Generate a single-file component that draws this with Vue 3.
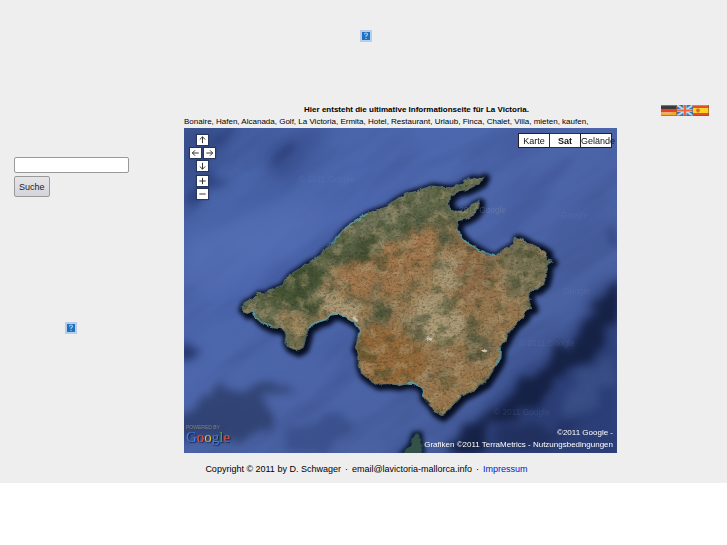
<script setup>
import { ref } from 'vue'

const query = ref('')
const mapTypes = ['Karte', 'Sat', 'Gelände']
const active = ref('Sat')

const controls = [
  { name: 'up', label: 'Nach oben', d: 'M5.500 9V2M2.500 5L5.500 2L8.500 5' },
  { name: 'left', label: 'Nach links', d: 'M9 5.500H2M5 2.500L2 5.500L5 8.500' },
  { name: 'right', label: 'Nach rechts', d: 'M2 5.500H9M6 2.500L9 5.500L6 8.500' },
  { name: 'down', label: 'Nach unten', d: 'M5.500 2V9M2.500 6L5.500 9L8.500 6' },
  { name: 'plus', label: 'Vergrößern', d: 'M5.500 2V9M2 5.500H9' },
  { name: 'minus', label: 'Verkleinern', d: 'M2 5.500H9' }
]

const island = 'M172 540L180 524L200 514L222 496L238 498L262 484L290 474L318 440L344 424L372 404L398 392L420 368L446 350L468 318L490 296L520 276L550 256L604 238L630 218L664 198L700 188L742 174L776 178L800 180L826 172L840 160L862 150L880 154L898 146L890 162L868 174L846 184L820 188L800 204L792 220L796 240L816 250L838 248L856 240L866 228L884 220L882 240L868 258L844 272L822 278L818 304L832 328L854 348L884 366L910 380L932 384L956 366L990 348L994 328L1010 332L1036 348L1068 360L1088 374L1086 394L1102 400L1088 410L1086 440L1080 464L1060 482L1040 486L1030 508L1044 540L1024 548L1018 566L990 590L972 616L960 640L948 658L946 690L936 712L920 736L904 762L886 774L862 788L832 804L810 826L790 848L772 862L752 850L736 826L716 806L714 782L694 766L668 764L640 770L610 766L580 768L556 754L534 736L524 710L524 682L512 660L522 630L528 604L512 584L488 570L462 558L440 560L426 574L400 582L370 602L364 630L356 658L340 668L314 656L304 638L306 618L292 602L262 598L236 586L216 568L206 548L188 556Z'
</script>

<template>
  <div class="page">
    <header class="banner">
      <svg class="missing" viewBox="0 0 12 12" role="img" aria-label="Logo">
        <rect width="12" height="12" fill="#b9cbe9" />
        <rect x="1" y="1" width="10" height="10" fill="#b5d0f0" />
        <rect x="2" y="2" width="8" height="8" fill="#1f70c0" />
        <path d="M4.500 4.500Q4.500 3 6 3T7.500 4.500Q7.500 5.300 6 6V7M6 8V9" fill="none" stroke="#a5cdf2" stroke-width="1.200" />
      </svg>
    </header>

    <div class="columns">
      <aside class="side">
        <form class="search" @submit.prevent>
          <input v-model="query" class="field" type="text" aria-label="Suchbegriff" />
          <button class="submit" type="submit">Suche</button>
        </form>
        <svg class="missing" viewBox="0 0 12 12" role="img" aria-label="Bild">
          <rect width="12" height="12" fill="#b9cbe9" />
          <rect x="1" y="1" width="10" height="10" fill="#b5d0f0" />
          <rect x="2" y="2" width="8" height="8" fill="#1f70c0" />
          <path d="M4.500 4.500Q4.500 3 6 3T7.500 4.500Q7.500 5.300 6 6V7M6 8V9" fill="none" stroke="#a5cdf2" stroke-width="1.200" />
        </svg>
      </aside>

      <main class="content">
        <h1 class="title">Hier entsteht die ultimative Informationseite für La Victoria.</h1>
        <p class="keywords">Bonaire, Hafen, Alcanada, Golf, La Victoria, Ermita, Hotel, Restaurant, Urlaub, Finca, Chalet, Villa, mieten, kaufen,</p>
        <div class="map">
          <svg class="terrain" viewBox="0 0 1299 975" preserveAspectRatio="xMidYMid slice" role="img" aria-label="Satellitenbild von Mallorca">
            <defs>
              <clipPath id="land"><path :d="island" /></clipPath>
              <linearGradient id="sea" x1="0" y1="0" x2="1" y2="1">
                <stop offset="0" stop-color="#4560a2" />
                <stop offset="0.300" stop-color="#4d67ae" />
                <stop offset="0.700" stop-color="#4a62a2" />
                <stop offset="1" stop-color="#3b5090" />
              </linearGradient>
              <filter id="soft" x="-50%" y="-50%" width="200%" height="200%"><feGaussianBlur stdDeviation="26" /></filter>
              <filter id="mid" x="-50%" y="-50%" width="200%" height="200%">
                <feTurbulence type="fractalNoise" baseFrequency="0.014" numOctaves="3" seed="6" result="n" />
                <feDisplacementMap in="SourceGraphic" in2="n" scale="90" xChannelSelector="R" yChannelSelector="G" />
                <feGaussianBlur stdDeviation="13" />
              </filter>
              <filter id="edge" x="-20%" y="-20%" width="140%" height="140%"><feGaussianBlur stdDeviation="7" /></filter>
              <filter id="coast" x="-10%" y="-10%" width="120%" height="120%">
                <feTurbulence type="fractalNoise" baseFrequency="0.050" numOctaves="3" seed="4" result="n" />
                <feDisplacementMap in="SourceGraphic" in2="n" scale="13" xChannelSelector="R" yChannelSelector="G" />
              </filter>
              <filter id="patch" x="-20%" y="-20%" width="140%" height="140%">
                <feTurbulence type="fractalNoise" baseFrequency="0.025" numOctaves="5" seed="8" result="n" />
                <feDisplacementMap in="SourceGraphic" in2="n" scale="140" xChannelSelector="R" yChannelSelector="G" />
                <feGaussianBlur stdDeviation="10" />
              </filter>
              <filter id="green" x="0" y="0" width="100%" height="100%">
                <feTurbulence type="fractalNoise" baseFrequency="0.018 0.024" numOctaves="6" seed="12" />
                <feColorMatrix values="0 0 0 0 0.240  0 0 0 0 0.290  0 0 0 0 0.180  5 0 0 0 -2.550" />
              </filter>
              <filter id="sand" x="0" y="0" width="100%" height="100%">
                <feTurbulence type="fractalNoise" baseFrequency="0.030" numOctaves="6" seed="31" />
                <feColorMatrix values="0 0 0 0 0.720  0 0 0 0 0.650  0 0 0 0 0.500  0 5 0 0 -2.450" />
              </filter>
              <filter id="grain" x="0" y="0" width="100%" height="100%">
                <feTurbulence type="fractalNoise" baseFrequency="0.160" numOctaves="3" seed="5" />
                <feColorMatrix values="0 0 0 0 0.160  0 0 0 0 0.150  0 0 0 0 0.090  0 0 3 0 -1.400" />
              </filter>
              <filter id="waves" x="0" y="0" width="100%" height="100%">
                <feTurbulence type="fractalNoise" baseFrequency="0.003 0.011" numOctaves="3" seed="9" />
                <feColorMatrix values="0 0 0 0 0.130  0 0 0 0 0.190  0 0 0 0 0.400  3 0 0 0 -1.400" />
              </filter>
            </defs>

            <rect width="1299" height="975" fill="url(#sea)" />
            <rect x="-500" y="-500" width="2300" height="2000" filter="url(#waves)" opacity="0.160" transform="rotate(-35 650 480)" />
            <g filter="url(#soft)">
              <path d="M0 340L250 240L480 210L330 360L60 500L0 480Z" fill="#5871b8" opacity="0.600" />
              <path d="M-20 -20H150L90 90L30 170L-20 270Z" fill="#2b3f78" opacity="0.550" />
              <path d="M230 80L330 20L440 -20L370 100L290 170Z" fill="#2c407b" opacity="0.500" />
              <path d="M1320 450L1240 480L1190 590L1120 670L1010 740L900 850L800 960L790 1000H1320Z" fill="#24356a" opacity="0.700" />
            </g>
            <g filter="url(#mid)">
              <path d="M-20 870L60 800L160 780L250 765L320 785L240 810L260 880L130 950L-20 930Z" fill="#26365f" opacity="0.700" />
              <path d="M1310 480L1250 500L1190 620L1110 690L1070 740L1020 740L960 830L850 890L800 940L800 990H840L920 900L1010 850L1070 840L1110 760L1200 710L1230 640L1310 590Z" fill="#0e1734" opacity="0.750" />
              <path d="M0 640L30 660L40 690L0 700Z" fill="#26386d" />
              <path d="M330 900L430 850L500 900L420 975H300Z" fill="#2b3f77" opacity="0.500" />
              <path d="M265 90L330 45L350 55L300 85L270 115ZM1290 310L1310 320V360L1285 350Z" fill="#1e2e62" opacity="0.700" />
              <path d="M130 0L80 60L120 40L160 0ZM60 140L20 190L0 260L40 220L130 135Z" fill="#1e2f64" opacity="0.550" />
              <path d="M1160 790L1240 700L1290 680L1280 780L1220 850L1130 870Z" fill="#41598f" opacity="0.550" />
              <path d="M940 900L1080 880L1180 900L1050 960L930 950Z" fill="#182447" opacity="0.500" />
            </g>

            <g fill="#8296ca" font-family="'Liberation Sans', sans-serif" font-size="25" opacity="0.180">
              <text x="345" y="163">© 2011 Google</text>
              <text x="1132" y="269">Google</text>
              <text x="1138" y="498">Google</text>
              <text x="1005" y="654">© 2011 Google</text>
              <text x="930" y="862">© 2011 Google</text>
            </g>

            <g filter="url(#edge)">
              <path :d="island" fill="#060e22" stroke="#060e22" stroke-width="28" stroke-linejoin="round" transform="translate(6 5)" />
              <path d="M640 980L670 950L685 910L715 910L725 980Z" fill="#0b1a33" />
            </g>
            <g filter="url(#coast)">
              <path :d="island" fill="#5c5b40" transform="translate(2 2)" />
              <g clip-path="url(#land)">
                <rect x="150" y="120" width="980" height="760" fill="#9a7a52" />
                <g filter="url(#patch)">
                  <path d="M100 490L440 280L640 140L950 80L920 250L790 290L650 330L560 400L430 450L400 560L360 690L150 620Z" fill="#656c4e" />
                  <path d="M250 460L380 390L430 440L390 560L330 520L260 550Z" fill="#465536" />
                  <path d="M480 360L540 350L590 380L540 450L480 440Z" fill="#3a4b30" />
                  <path d="M640 300L740 240L800 250L700 320Z" fill="#566044" />
                  <path d="M560 270L660 230L720 240L600 310L540 320Z" fill="#7d8065" />
                  <path d="M920 380L1010 300L1130 370L1090 520L1000 510L940 440Z" fill="#787253" />
                  <path d="M560 370L720 300L800 330L700 430L640 480L480 500L430 450Z" fill="#a5794e" />
                  <path d="M760 370L840 420L800 510L850 600L760 670L670 570L700 500L740 480Z" fill="#ab9a76" />
                  <path d="M830 330L930 390L910 480L870 560L830 450Z" fill="#8f6c48" />
                  <path d="M510 600L640 590L730 680L680 780L560 780L500 700Z" fill="#986c3c" />
                  <path d="M410 480L510 490L540 590L480 590L410 560Z" fill="#ad9b77" />
                  <path d="M300 540L350 540L370 600L330 640Z" fill="#a18860" />
                  <path d="M740 300L800 290L840 330L780 350ZM550 490L600 500L610 590L570 590ZM640 570L710 590L730 640L680 630ZM860 610L930 600L920 680L870 710Z" fill="#5f6147" />
                  <path d="M740 740L860 720L930 760L770 870Z" fill="#9c7a50" />
                </g>
                <g transform="rotate(-30 640 500)">
                  <rect x="50" y="0" width="1180" height="1000" filter="url(#green)" opacity="0.450" />
                  <rect x="50" y="0" width="1180" height="1000" filter="url(#sand)" opacity="0.400" />
                </g>
                <rect x="150" y="120" width="980" height="760" filter="url(#grain)" opacity="0.400" />
                <path d="M507 566L520 580M729 627L742 637M897 668L905 674" stroke="#d0c8b5" stroke-width="7" />
              </g>
              <path :d="island" fill="none" stroke="#56787a" stroke-width="4" opacity="0.600" />
              <path d="M206 548L216 568L236 586L262 598M370 602L400 582L426 574L440 560L462 558L488 570L512 584L528 604L522 630M668 764L694 766L714 782L716 806M820 304L832 328L854 348L884 366L932 384M948 658L946 690L936 712M440 350L468 318L490 296L550 256" fill="none" stroke="#65a9b5" stroke-width="5" stroke-linejoin="round" opacity="0.700" />
              <path d="M655 980L678 952L684 930L700 915L708 930L716 980Z" fill="#345247" />
            </g>
            <text x="825" y="254" fill="#a9b2bb" font-family="'Liberation Sans', sans-serif" font-size="25" opacity="0.250">2011 Google</text>
          </svg>

          <div class="pad">
            <button v-for="c in controls" :key="c.name" :class="['knob', c.name]" type="button" :aria-label="c.label">
              <svg viewBox="0 0 11 11"><path :d="c.d" /></svg>
            </button>
          </div>

          <div class="types">
            <button v-for="t in mapTypes" :key="t" type="button" :class="['type', { active: t === active }]" @click="active = t">{{ t }}</button>
          </div>

          <div class="powered">
            <span class="by">POWERED BY</span>
            <span class="google"><span class="blue">G</span><span class="red">o</span><span class="yellow">o</span><span class="blue">g</span><span class="green">l</span><span class="red">e</span></span>
          </div>
          <div class="credits">©2011 Google -<br />Grafiken ©2011 TerraMetrics - <a href="#terms">Nutzungsbedingungen</a></div>
        </div>
      </main>

      <nav class="languages" aria-label="Sprache">
        <a href="#de" aria-label="Deutsch">
          <svg viewBox="0 0 16 11">
            <rect width="16" height="4" fill="#3c3a3a" /><rect y="4" width="16" height="3" fill="#e8402a" /><rect y="7" width="16" height="4" fill="#f3a735" />
            <path d="M1 7H10V9H2Z" fill="#edae76" /><path d="M0 0.500H16" stroke="#777" /><path d="M15.500 0V11M0 10.500H16" stroke="#8b6948" opacity="0.700" />
          </svg>
        </a>
        <a href="#en" aria-label="English">
          <svg viewBox="0 0 16 11">
            <rect width="16" height="11" fill="#2f78c6" /><path d="M0 0L16 11M16 0L0 11" stroke="#c5d6e8" stroke-width="2" />
            <path d="M8 0V11M0 5.500H16" stroke="#f0d3c4" stroke-width="3" /><path d="M8 0V11M0 5.500H16" stroke="#e6683c" stroke-width="2" />
            <path d="M15.500 0V11M0 10.500H16" stroke="#56698a" opacity="0.500" />
          </svg>
        </a>
        <a href="#es" aria-label="Español">
          <svg viewBox="0 0 16 11">
            <rect width="16" height="11" fill="#e74d2a" /><rect y="3" width="16" height="5" fill="#fbd324" /><path d="M3 5.500H7M5 3.500V7.500" stroke="#d96b2a" stroke-width="2" />
            <path d="M0 0.500H16" stroke="#c8895b" /><path d="M15.500 0V11M0 10.500H16" stroke="#9b4f32" opacity="0.700" />
          </svg>
        </a>
      </nav>
    </div>

    <footer class="footer">
      <span>Copyright © 2011 by D. Schwager</span><span>·</span><span>email@lavictoria-mallorca.info</span><span>·</span><a href="#impressum">Impressum</a>
    </footer>
  </div>
</template>

<style>
body { margin: 0; background: #fff; }
</style>

<style scoped>
.page { background: #eee; color: #000; font-family: "Liberation Sans", Arial, sans-serif; font-size: 8px; }
.banner { display: flex; justify-content: center; padding: 30px 0 62px 5px; }
.missing { display: block; width: 12px; height: 12px; }
.columns { display: grid; grid-template-columns: 184px minmax(0, 1fr) 110px; }
.side { display: flex; flex-direction: column; gap: 125px; padding: 53px 14px 0; }
.side .missing { margin-left: 51px; }
.search { display: flex; flex-direction: column; align-items: flex-start; gap: 3px; }
.field { box-sizing: border-box; width: 115px; height: 16px; padding: 1px 3px; border: 1px solid #999; border-radius: 2px; background: #fff; font: inherit; }
.submit { height: 21px; padding: 0 4px; border: 1px solid #999; border-radius: 2px; background: linear-gradient(#e6e6e9, #d3d4db); color: #222; font: 9px "Liberation Sans", Arial, sans-serif; }
.content { min-width: 0; }
.title { margin: 0; padding-left: 32px; font-size: 8px; line-height: 12px; text-align: center; }
.keywords { margin: 0; line-height: 12px; white-space: nowrap; }
.map { position: relative; aspect-ratio: 433 / 325; overflow: hidden; background: #4862a4; }
.terrain { display: block; width: 100%; height: 100%; }
.terrain filter { color-interpolation-filters: sRGB; }
.pad { position: absolute; top: 7px; left: 6px; display: grid; grid-template-columns: repeat(4, 6px); grid-template-rows: 10px 10px 12px 10px 10px; gap: 3px 1px; }
.knob { width: 11px; height: 10px; padding: 0; border: 0; background: #fff; box-shadow: 0 0 1px 1px #26365f; }
.knob svg { display: block; width: 11px; height: 10px; fill: none; stroke: #222; stroke-width: 1; }
.up { grid-area: 1 / 2 / 2 / 4; }
.left { grid-area: 2 / 1 / 3 / 3; }
.right { grid-area: 2 / 3 / 3 / 5; }
.down { grid-area: 3 / 2 / 4 / 4; }
.plus { grid-area: 4 / 2 / 5 / 4; }
.minus { grid-area: 5 / 2 / 6 / 4; }
.types { position: absolute; top: 5px; right: 5px; display: flex; }
.type { display: flex; align-items: center; justify-content: safe center; box-sizing: border-box; width: 32px; height: 15px; margin-left: -1px; padding: 0; border: 1px solid #222; background: #fff; color: #111; font: 9px "Liberation Sans", Arial, sans-serif; white-space: nowrap; }
.active { font-weight: bold; border-color: #1d2f63; }
.powered { position: absolute; left: 2px; bottom: 8px; display: flex; flex-direction: column; }
.by { color: #7f8078; font-size: 5px; line-height: 6px; }
.google { font-family: "Liberation Serif", serif; font-size: 15px; line-height: 15px; text-shadow: 1px 1px 1px #17203d; }
.blue { color: #3f7de8; }
.red { color: #ea5036; }
.yellow { color: #edbd2c; }
.green { color: #35ad4a; }
.credits { position: absolute; right: 4px; bottom: 2px; color: #fff; line-height: 12px; text-align: right; white-space: nowrap; }
.credits a { color: inherit; text-decoration: none; }
.languages { display: flex; justify-content: flex-end; align-items: flex-start; padding: 1px 18px 0 0; }
.languages svg { display: block; width: 16px; height: 11px; }
.footer { display: flex; justify-content: center; gap: 4px; padding: 10px 0 8px 6px; font-size: 9px; line-height: 12px; }
.footer a { color: #0018d0; text-decoration: none; }
</style>
